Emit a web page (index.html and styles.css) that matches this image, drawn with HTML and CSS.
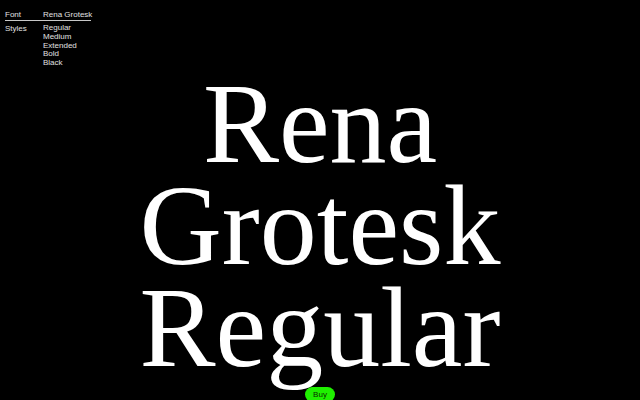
FILE: index.html
```html
<!DOCTYPE html>
<html>
<head>
<meta charset="utf-8">
<link rel="stylesheet" href="styles.css">
</head>
<body>
<header class="meta">
  <div class="meta-row meta-head">
    <span class="label">Font</span>
    <span class="value">Rena Grotesk</span>
  </div>
  <div class="meta-row">
    <span class="label">Styles</span>
    <ul class="styles">
      <li>Regular</li>
      <li>Medium</li>
      <li>Extended</li>
      <li>Bold</li>
      <li>Black</li>
    </ul>
  </div>
</header>
<main class="specimen">
  <h1 class="title">Rena<br>Grotesk<br>Regular</h1>
</main>
<a class="buy" href="#">Buy</a>
</body>
</html>
```
FILE: styles.css
```css
html, body {
  margin: 0;
  padding: 0;
  background: #000;
  height: 100%;
  overflow: hidden;
}
body {
  font-family: "Liberation Sans", Arial, sans-serif;
  color: #e0e0e0;
}
.meta {
  padding: 10px 0 0 5px;
  font-size: 8px;
  line-height: 9px;
  white-space: nowrap;
}
.meta-row {
  display: grid;
  grid-template-columns: 38px max-content;
  width: 86px;
}
.meta-head {
  border-bottom: 1px solid #c8c8c8;
  padding-bottom: 1px;
  margin-bottom: 3px;
}
.styles {
  list-style: none;
  margin: 0;
  padding: 0;
}
.styles li {
  line-height: 8.8px;
}
.specimen {
  margin-top: 5px;
}
.title {
  margin: 0;
  font-family: "Liberation Serif", "Times New Roman", serif;
  font-weight: normal;
  font-size: 114px;
  line-height: 102px;
  color: #fff;
  text-align: center;
}
.buy {
  position: fixed;
  left: 305px;
  top: 387px;
  width: 30px;
  height: 15px;
  border-radius: 8px;
  background: #1ff000;
  color: #0a2a00;
  font-size: 8px;
  line-height: 15px;
  text-align: center;
  text-decoration: none;
}
```
